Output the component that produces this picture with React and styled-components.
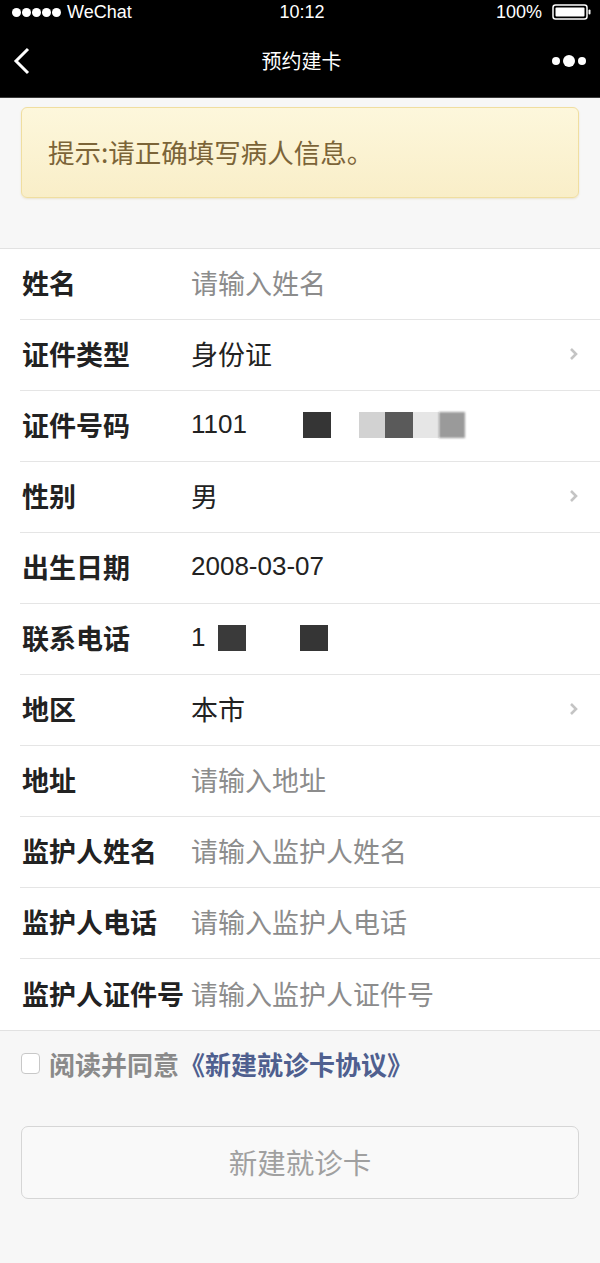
import React from 'react';
import styled, { createGlobalStyle } from 'styled-components';

const GlobalStyle = createGlobalStyle`
  html, body {
    margin: 0;
    padding: 0;
    background: #f7f7f7;
  }
  body {
    font-family: "Noto Sans CJK SC", "Noto Sans", sans-serif;
  }
`;

const Page = styled.div`
  width: 600px;
  min-height: 1263px;
  background: #f7f7f7;
`;

const StatusBar = styled.div`
  height: 24px;
  background: #000;
  color: #fff;
  display: grid;
  grid-template-columns: 1fr auto 1fr;
  align-items: center;
  padding: 0 8px 0 12px;
  font-family: "Liberation Sans", Arial, sans-serif;
  font-size: 18px;
`;

const Signal = styled.div`
  display: flex;
  align-items: center;
  gap: 1px;
`;

const Dot = styled.span`
  width: 9px;
  height: 9px;
  border-radius: 50%;
  background: #fff;
`;

const Carrier = styled.span`
  margin-left: 5px;
`;

const Battery = styled.div`
  display: flex;
  align-items: center;
  justify-content: flex-end;
  gap: 10px;
`;

const NavBar = styled.div`
  height: 73px;
  background: #000;
  color: #fff;
  display: flex;
  align-items: center;
  justify-content: space-between;
  padding: 0 14px 0 13px;
  border-bottom: 1px solid #3a3a3a;
`;

const NavTitle = styled.div`
  font-size: 20px;
  margin-left: 20px;
`;

const Notice = styled.div`
  margin: 9px 21px 0 21px;
  height: 91px;
  box-sizing: border-box;
  border: 1px solid #f0dea0;
  border-radius: 6px;
  background: linear-gradient(#fdf7dc, #f9eec8);
  box-shadow: 0 1px 2px rgba(200, 170, 90, 0.25);
  display: flex;
  align-items: center;
  padding: 0 0 2px 26px;
  font-size: 26.5px;
  color: #7b6438;
`;

const Form = styled.div`
  margin-top: 50px;
  background: #fff;
  border-top: 1px solid #e2e2e2;
  border-bottom: 1px solid #e2e2e2;
  padding-left: 20px;
`;

const Row = styled.div`
  height: 71px;
  box-sizing: border-box;
  display: flex;
  align-items: center;
  padding: 0 21px 3px 2px;
  border-bottom: ${(p) => (p.last ? 'none' : '1px solid #e5e5e5')};
`;

const Label = styled.div`
  width: 169px;
  flex-shrink: 0;
  font-size: 27px;
  font-weight: 700;
  color: #222;
  white-space: nowrap;
`;

const Value = styled.div`
  flex: 1;
  display: flex;
  align-items: center;
  font-size: ${(p) => (p.latin ? '26px' : '27px')};
  color: ${(p) => (p.placeholder ? '#8c8c8c' : '#222')};
  font-family: ${(p) =>
    p.latin ? '"Liberation Sans", Arial, sans-serif' : 'inherit'};
`;

const Mask = styled.span`
  display: inline-block;
  width: ${(p) => p.w}px;
  height: 26px;
  margin-left: ${(p) => p.gap || 0}px;
  background: ${(p) => p.color};
  filter: blur(${(p) => p.blur || 0}px);
`;

const Agree = styled.div`
  display: flex;
  align-items: center;
  padding: 15px 21px 0 21px;
  height: 34px;
  font-size: 26px;
  font-weight: 700;
`;

const Check = styled.span`
  width: 17px;
  height: 19px;
  border: 1px solid #c8c8c8;
  border-radius: 4px;
  background: #fff;
  margin-right: 9px;
  flex-shrink: 0;
`;

const AgreeText = styled.span`
  color: #8a8a8a;
`;

const Link = styled.span`
  color: #4f5f8f;
`;

const Button = styled.div`
  margin: 46px 21px 0 21px;
  height: 73px;
  box-sizing: border-box;
  border: 1px solid #d6d6d6;
  border-radius: 7px;
  background: #f9f9f9;
  display: flex;
  align-items: center;
  justify-content: center;
  padding-bottom: 2px;
  font-size: 28.5px;
  color: #a0a0a0;
`;

const Chevron = () => (
  <svg width="10" height="14" viewBox="0 0 10 14">
    <polyline points="2,2 7,7 2,12" fill="none" stroke="#c4c4c4" strokeWidth="2.6" />
  </svg>
);

const rows = [
  { label: '姓名', value: '请输入姓名', placeholder: true },
  { label: '证件类型', value: '身份证', arrow: true },
  { label: '证件号码', id: true },
  { label: '性别', value: '男', arrow: true },
  { label: '出生日期', value: '2008-03-07', latin: true },
  { label: '联系电话', phone: true },
  { label: '地区', value: '本市', arrow: true },
  { label: '地址', value: '请输入地址', placeholder: true },
  { label: '监护人姓名', value: '请输入监护人姓名', placeholder: true },
  { label: '监护人电话', value: '请输入监护人电话', placeholder: true },
  { label: '监护人证件号', value: '请输入监护人证件号', placeholder: true },
];

const renderValue = (r) => {
  if (r.id) {
    return (
      <Value latin>
        1101
        <Mask w={28} gap={56} color="#353535" />
        <Mask w={26} gap={28} color="#d2d2d2" blur={0.6} />
        <Mask w={28} color="#5a5a5a" />
        <Mask w={26} color="#e6e6e6" blur={0.6} />
        <Mask w={26} color="#9a9a9a" blur={1} />
      </Value>
    );
  }
  if (r.phone) {
    return (
      <Value latin>
        1
        <Mask w={28} gap={13} color="#3a3a3a" />
        <Mask w={28} gap={54} color="#353535" />
      </Value>
    );
  }
  return (
    <Value placeholder={r.placeholder} latin={r.latin}>
      {r.value}
    </Value>
  );
};

export default function App() {
  return (
    <Page>
      <GlobalStyle />
      <StatusBar>
        <Signal>
          <Dot />
          <Dot />
          <Dot />
          <Dot />
          <Dot />
          <Carrier>WeChat</Carrier>
        </Signal>
        <span>10:12</span>
        <Battery>
          <span>100%</span>
          <svg width="40" height="16" viewBox="0 0 40 16">
            <rect x="1" y="1" width="34" height="14" rx="2.5" fill="none" stroke="#fff" strokeWidth="1.5" />
            <rect x="3.5" y="3.5" width="29" height="9" rx="1" fill="#fff" />
            <rect x="36.5" y="5.5" width="2" height="5" rx="1" fill="#fff" />
          </svg>
        </Battery>
      </StatusBar>
      <NavBar>
        <svg width="18" height="28" viewBox="0 0 18 28">
          <polyline points="15,2 3,14 15,26" fill="none" stroke="#fff" strokeWidth="3" />
        </svg>
        <NavTitle>预约建卡</NavTitle>
        <svg width="34" height="14" viewBox="0 0 34 14">
          <circle cx="4" cy="7" r="4" fill="#fff" />
          <circle cx="17" cy="7" r="6" fill="#fff" />
          <circle cx="30" cy="7" r="4" fill="#fff" />
        </svg>
      </NavBar>
      <Notice>提示:请正确填写病人信息。</Notice>
      <Form>
        {rows.map((r, i) => (
          <Row key={r.label} last={i === rows.length - 1}>
            <Label>{r.label}</Label>
            {renderValue(r)}
            {r.arrow && <Chevron />}
          </Row>
        ))}
      </Form>
      <Agree>
        <Check />
        <AgreeText>阅读并同意</AgreeText>
        <Link>《新建就诊卡协议》</Link>
      </Agree>
      <Button>新建就诊卡</Button>
    </Page>
  );
}
